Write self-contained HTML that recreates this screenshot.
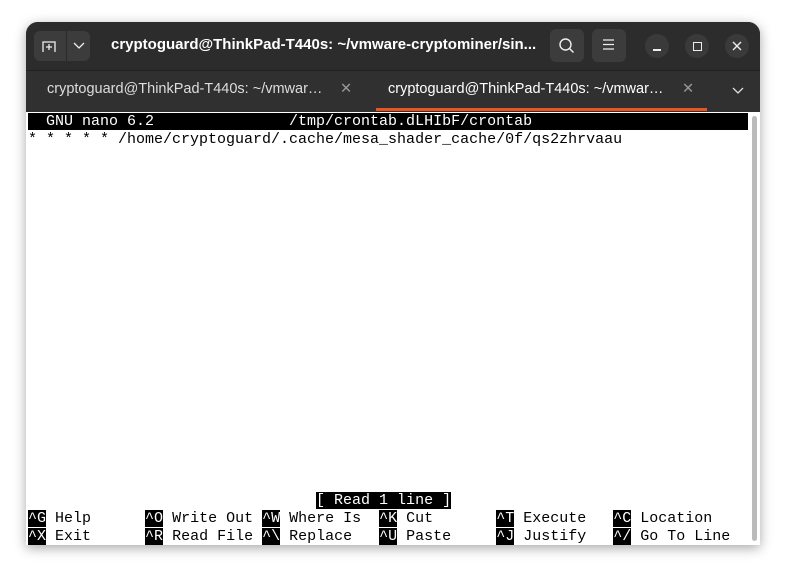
<!DOCTYPE html>
<html><head><style>
body{margin:0;width:786px;height:574px;background:#fff;position:relative;overflow:hidden;font-family:"Liberation Sans",sans-serif}
.win{position:absolute;left:26px;top:22px;width:734px;height:523px;border-radius:12px 12px 0 0;background:#2c2c2c;box-shadow:0 3px 12px rgba(0,0,0,.35);overflow:hidden}
.hb{position:absolute;left:0;top:0;width:734px;height:48px;background:#2c2c2c}
.tb{position:absolute;left:0;top:48px;width:734px;height:41px;background:#303030;border-top:1px solid #222}
.btn{position:absolute;background:#3c3c3c;border-radius:6px}
.circ{position:absolute;width:24px;height:24px;border-radius:12px;background:#3a3a3a;top:12px}
.title{position:absolute;left:85px;top:14px;color:#fff;font-weight:bold;font-size:15px}
.tab{position:absolute;top:59px;color:#ddd;font-size:14.5px}
.term{position:absolute;left:0;top:90px;width:734px;height:433px;background:#fff}
pre{margin:0;position:absolute;left:2px;font-family:"Liberation Mono",monospace;font-size:15px;line-height:18px;color:#000}
.k{background:#000;color:#fff}
</style></head><body>
<div class="win">
<div class="hb">
 <div class="btn" style="left:8px;top:9px;width:56px;height:30px"></div>
 <div style="position:absolute;left:40px;top:9px;width:1px;height:30px;background:#2a2a2a"></div>
 <svg style="position:absolute;left:16px;top:16px" width="18" height="16"><path d="M1 14V4h12v10M7 6v6M4 9h6" stroke="#eee" fill="none" stroke-width="1.3"/></svg>
 <svg style="position:absolute;left:47px;top:20px" width="12" height="8"><path d="M1 1l5 5 5-5" stroke="#eee" fill="none" stroke-width="1.3"/></svg>
 <div class="title">cryptoguard@ThinkPad-T440s: ~/vmware-cryptominer/sin...</div>
 <div class="btn" style="left:524px;top:7px;width:34px;height:33px"></div>
 <svg style="position:absolute;left:532px;top:15px" width="18" height="18"><circle cx="7.5" cy="7.5" r="5.5" stroke="#eee" fill="none" stroke-width="1.4"/><path d="M11.5 11.5l4 4" stroke="#eee" stroke-width="1.5"/></svg>
 <div class="btn" style="left:566px;top:7px;width:34px;height:33px"></div>
 <svg style="position:absolute;left:576px;top:16px" width="14" height="14"><path d="M1 2h11M1 6.5h11M1 11h11" stroke="#eee" stroke-width="1.3"/></svg>
 <div class="circ" style="left:619px"></div><div style="position:absolute;left:627px;top:27px;width:8px;height:1.5px;background:#eee"></div>
 <div class="circ" style="left:659px"></div><div style="position:absolute;left:667px;top:20px;width:7px;height:7px;border:1.3px solid #eee"></div>
 <div class="circ" style="left:699px"></div><svg style="position:absolute;left:706px;top:19px" width="10" height="10"><path d="M1 1l8 8M9 1l-8 8" stroke="#eee" stroke-width="1.4"/></svg>
</div>
<div class="tb"></div>
<div class="tab" style="left:21px">cryptoguard@ThinkPad-T440s: ~/vmwar…</div>
<div class="tab" style="left:314px;color:#999">✕</div>
<div class="tab" style="left:362px;color:#fff">cryptoguard@ThinkPad-T440s: ~/vmwar…</div>
<div class="tab" style="left:656px;color:#999">✕</div>
<svg style="position:absolute;left:706px;top:65px" width="12" height="8"><path d="M1 1l5 5 5-5" stroke="#ddd" fill="none" stroke-width="1.3"/></svg>
<div style="position:absolute;left:350px;top:86px;width:331px;height:3px;background:#e95420"></div>
<div class="term">
<div style="position:absolute;left:726px;top:4px;width:5px;height:425px;background:#bbb;border-radius:3px"></div>
<pre style="top:1px"><span class="k">  GNU nano 6.2               /tmp/crontab.dLHIbF/crontab                        </span>
* * * * * /home/cryptoguard/.cache/mesa_shader_cache/0f/qs2zhrvaau</pre>
<pre style="top:380px">                                <span class="k">[ Read 1 line ]</span>
<span class="k">^G</span> Help      <span class="k">^O</span> Write Out <span class="k">^W</span> Where Is  <span class="k">^K</span> Cut       <span class="k">^T</span> Execute   <span class="k">^C</span> Location
<span class="k">^X</span> Exit      <span class="k">^R</span> Read File <span class="k">^\</span> Replace   <span class="k">^U</span> Paste     <span class="k">^J</span> Justify   <span class="k">^/</span> Go To Line</pre>
</div>
</div>
</body></html>
